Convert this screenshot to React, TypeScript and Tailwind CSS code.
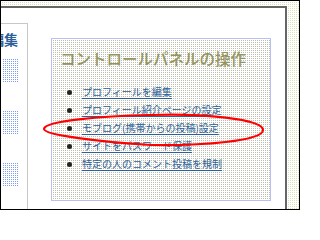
import React from 'react';

const links = [
  'プロフィールを編集',
  'プロフィール紹介ページの設定',
  'モブログ(携帯からの投稿)設定',
  'サイトをパスワード保護',
  '特定の人のコメント投稿を規制',
];

const App: React.FC = () => {
  return (
    <div className="relative w-[300px] h-[210px] overflow-hidden border border-black bg-white [background-image:linear-gradient(90deg,#ffffff_1px,transparent_1px),linear-gradient(#ffffff_1px,#d8e2b8_1px)] [background-size:2px_2px] font-['Noto_Sans_CJK_JP',sans-serif]">
      <div className="mt-[5px] mr-[12px] h-[210px] flex border-t-2 border-t-[#666666] border-r-2 border-r-[#666666] bg-white">
        {/* left column, mostly cut off */}
        <div className="mt-[15px] w-[27px] shrink-0 border-t border-r border-[#c8c8c8] overflow-hidden">
          <div className="mt-[8px] ml-[-11px] whitespace-nowrap text-[14px] leading-[14px] font-bold text-[#2d5f99]">
            編集
          </div>
          <div className="mt-[12px] ml-[1px] flex flex-col gap-[27px]">
            {[0, 1, 2].map((i) => (
              <div
                key={i}
                className="w-[16px] h-[25px] bg-[#eef2ff] [background-image:linear-gradient(90deg,#ffffff_1px,transparent_1px),linear-gradient(#ffffff_1px,#7f9cff_1px)] [background-size:2px_2px]"
              />
            ))}
          </div>
        </div>

        {/* control panel box */}
        <div className="ml-[23px] mt-[30px]">
          <div className="w-[220px] h-[163px] border border-[#b8c0f0] bg-white [background-image:linear-gradient(90deg,#ffffff_1px,transparent_1px),linear-gradient(#ffffff_1px,#bcbeac_1px)] [background-size:2px_2px] pt-[10px]">
            <h2 className="pl-[8px] text-[15.5px] leading-[18px] font-medium text-[#94945e] whitespace-nowrap">
              コントロールパネルの操作
            </h2>
            <ul className="mt-[16px]">
              {links.map((label) => (
                <li key={label} className="flex items-center h-[18px]">
                  <span className="ml-[15px] w-[5px] h-[5px] rounded-full bg-[#222222] shrink-0" />
                  <a
                    href="#"
                    className="ml-[10px] text-[10px] leading-[12px] whitespace-nowrap text-[#2d5f99] underline decoration-[#2d5f99] underline-offset-2"
                  >
                    {label}
                  </a>
                </li>
              ))}
            </ul>
          </div>
        </div>
      </div>

      {/* hand drawn red circle */}
      <svg className="absolute inset-0 pointer-events-none" width="300" height="210" viewBox="0 0 300 210">
        <path
          d="M 262 129 C 262 118, 200 112, 150 114 C 100 115, 43 120, 43 128 C 43 134, 100 141, 150 144 C 200 145, 262 140, 262 129 Z"
          fill="none"
          stroke="#ff0000"
          strokeWidth="2.2"
        />
      </svg>
    </div>
  );
};

export default App;
